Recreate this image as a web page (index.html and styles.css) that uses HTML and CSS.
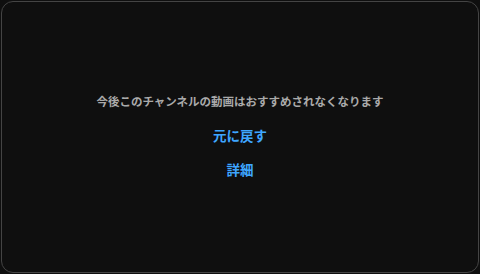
FILE: index.html
```html
<!DOCTYPE html>
<html lang="ja">
<head>
<meta charset="utf-8">
<link rel="stylesheet" href="styles.css">
</head>
<body>
<div class="card">
  <div class="content">
    <p class="message">今後このチャンネルの動画はおすすめされなくなります</p>
    <button class="action">元に戻す</button>
    <button class="action">詳細</button>
  </div>
</div>
</body>
</html>
```

FILE: styles.css
```css
html, body {
  margin: 0;
  padding: 0;
  background: #0f0f0f;
}
body {
  width: 480px;
  height: 274px;
  padding: 1px;
  box-sizing: border-box;
  font-family: "Noto Sans CJK JP", "Noto Sans", sans-serif;
}
.card {
  height: 100%;
  box-sizing: border-box;
  border: 1px solid #444444;
  border-radius: 12px;
  background: #0f0f0f;
  display: flex;
  align-items: center;
  justify-content: center;
  padding-top: 5px;
}
.content {
  display: flex;
  flex-direction: column;
  align-items: center;
}
.message {
  margin: 0 0 9px;
  font-size: 11.5px;
  line-height: 16px;
  font-weight: 700;
  color: #aaaaaa;
}
.action {
  height: 34px;
  padding: 0 10px;
  border: none;
  background: transparent;
  font-family: inherit;
  font-size: 13.5px;
  font-weight: 700;
  color: #3ea6ff;
  cursor: pointer;
}
```
